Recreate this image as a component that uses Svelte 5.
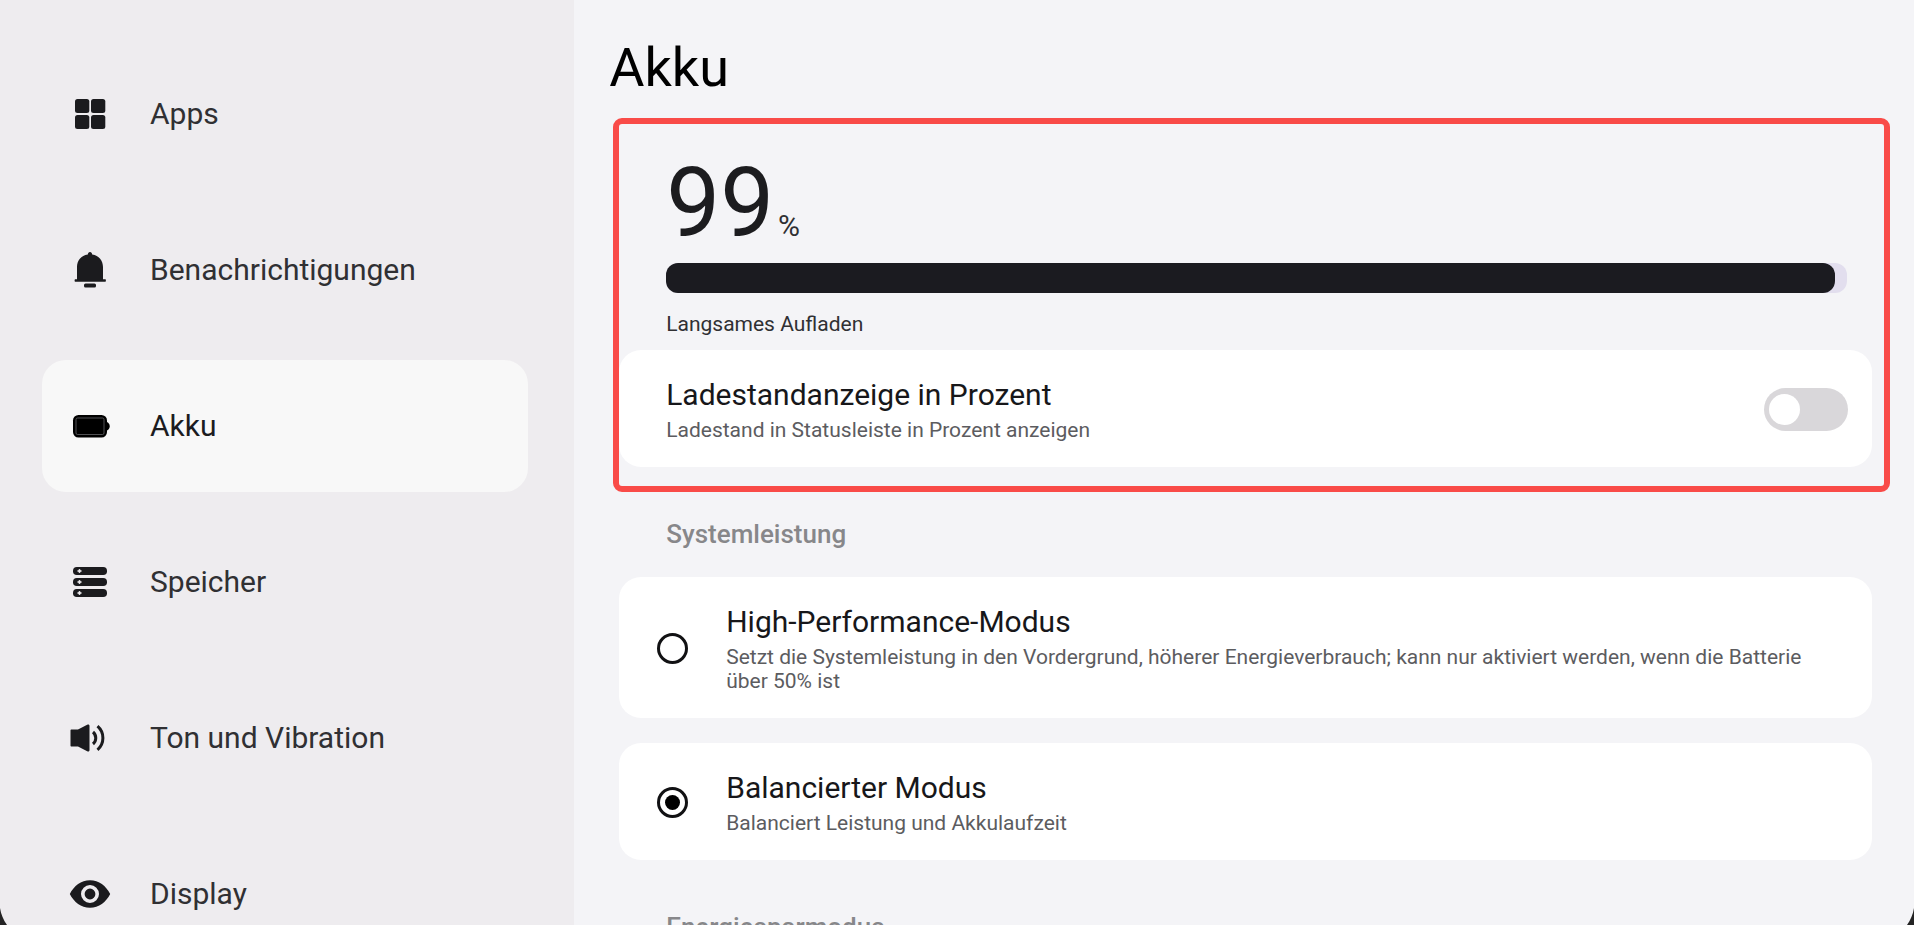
<script>
  const navItems = [
    { id: 'apps', label: 'Apps' },
    { id: 'bell', label: 'Benachrichtigungen' },
    { id: 'battery', label: 'Akku' },
    { id: 'storage', label: 'Speicher' },
    { id: 'sound', label: 'Ton und Vibration' },
    { id: 'display', label: 'Display' }
  ];

  const modes = [
    {
      id: 'performance',
      title: 'High-Performance-Modus',
      text: 'Setzt die Systemleistung in den Vordergrund, höherer Energieverbrauch; kann nur aktiviert werden, wenn die Batterie über 50% ist'
    },
    {
      id: 'balanced',
      title: 'Balancierter Modus',
      text: 'Balanciert Leistung und Akkulaufzeit'
    }
  ];

  const level = 99;
  let active = $state('battery');
  let mode = $state('balanced');
  let showPercent = $state(false);
</script>

<div class="screen">
  <nav class="sidebar" aria-label="Einstellungen">
    <ul>
      {#each navItems as item (item.id)}
        <li>
          <a
            href={'#' + item.id}
            class:active={active === item.id}
            aria-current={active === item.id ? 'page' : undefined}
            onclick={() => (active = item.id)}
          >
            <svg class="icon" viewBox="0 0 44 44" aria-hidden="true">
              {#if item.id === 'apps'}
                <rect x="7" y="7" width="14.300" height="14" rx="2.500" />
                <rect x="23" y="7" width="14.300" height="14" rx="2.500" />
                <rect x="7" y="23" width="14.300" height="14" rx="2.500" />
                <rect x="23" y="23" width="14.300" height="14" rx="2.500" />
              {:else if item.id === 'bell'}
                <path d="M22 4c1.300 0 2 .9 2.200 2.400C31 7.500 35 12.500 35 19v12.200h2c.7 0 .9.5.9 1.300s-.3 1.300-.9 1.300H7.500c-.7 0-.9-.5-.9-1.300s.3-1.300.9-1.300H9V19c0-6.500 4-11.500 10.800-12.600C20 4.900 20.700 4 22 4z" />
                <rect x="16" y="35.500" width="12" height="4" rx="1.500" />
              {:else if item.id === 'battery'}
                <rect x="5" y="11" width="34" height="22.500" rx="5.500" />
                <path d="M39 18c1.800.8 2.700 2.200 2.700 4.200s-.9 3.400-2.700 4.200z" />
                <rect class="outline" x="8" y="14" width="28" height="16.500" rx="1.500" />
              {:else if item.id === 'storage'}
                {#each [7, 18, 29] as y}
                  <rect x="5" {y} width="34" height="8" rx="3.800" />
                  <path class="mark" d="M11.500 {y + 2}l.7 1.300 1.300.7-1.300.7-.7 1.300-.7-1.300-1.300-.7 1.300-.7z" />
                {/each}
              {:else if item.id === 'sound'}
                <path d="M2.500 14.500c0-.6.4-1 1-1h6.500l9.200-4.700c1.300-.7 2.300-.2 2.300 1.200v24c0 1.400-1 1.900-2.300 1.200l-9.200-4.700H3.500c-.6 0-1-.4-1-1z" />
                <path class="wave" d="M25 16c3.700 3.200 3.700 8.800 0 12M29.500 10.200c7.200 6.200 7.200 17.400 0 23.600" />
              {:else}
                <path fill-rule="evenodd" d="M1.800 22C6 13.800 13 8.200 22 8.200S38 13.800 42.200 22C38 30.200 31 35.800 22 35.800S6 30.200 1.800 22zM22 13a9 9 0 1 0 0 18 9 9 0 0 0 0-18zm0 3.600a5.400 5.400 0 1 1 0 10.800 5.400 5.400 0 0 1 0-10.800z" />
              {/if}
            </svg>
            <span>{item.label}</span>
          </a>
        </li>
      {/each}
    </ul>
  </nav>

  <main>
    <h1>Akku</h1>

    <section class="highlight" aria-label="Ladestand">
      <div class="status">
        <p class="level"><span class="number">{level}</span><span class="unit">%</span></p>
        <div class="bar" role="meter" aria-label="Ladestand" aria-valuemin="0" aria-valuemax="100" aria-valuenow={level}>
          <div class="fill" style="width: {level}%"></div>
        </div>
        <p class="caption">Langsames Aufladen</p>
      </div>

      <label class="card toggle-card">
        <span class="texts">
          <span class="title">Ladestandanzeige in Prozent</span>
          <span class="text">Ladestand in Statusleiste in Prozent anzeigen</span>
        </span>
        <input class="switch" type="checkbox" role="switch" bind:checked={showPercent} />
      </label>
    </section>

    <h2>Systemleistung</h2>
    <div class="modes" role="radiogroup" aria-label="Systemleistung">
      {#each modes as m (m.id)}
        <label class="card mode-card">
          <input class="radio" type="radio" name="mode" value={m.id} bind:group={mode} />
          <span class="texts">
            <span class="title">{m.title}</span>
            <span class="text">{m.text}</span>
          </span>
        </label>
      {/each}
    </div>

    <h2 class="next">Energiesparmodus</h2>
  </main>

  <svg class="corner left" viewBox="0 0 7 17" aria-hidden="true"><path d="M0 0C1 6.500 3.500 12 7 17H0z" /></svg>
  <svg class="corner right" viewBox="0 0 7 17" aria-hidden="true"><path d="M7 0C6 6.500 3.500 12 0 17h7z" /></svg>
</div>

<style>
  :global(body) {
    margin: 0;
  }

  .screen {
    position: relative;
    display: flex;
    height: 100vh;
    overflow: hidden;
    background: #f4f4f7;
    color: #1c1c1f;
    font-family: Roboto, "Noto Sans", sans-serif;
  }

  .sidebar {
    flex: 0 0 30%;
    box-sizing: border-box;
    padding: 48px 46px 0 42px;
    background: #eeecef;
  }

  ul {
    display: flex;
    flex-direction: column;
    gap: 24px;
    margin: 0;
    padding: 0;
    list-style: none;
  }

  a {
    display: flex;
    align-items: center;
    gap: 38px;
    height: 132px;
    padding-left: 26px;
    border-radius: 24px;
    color: #303033;
    font-size: 30px;
    line-height: 36px;
    text-decoration: none;
  }

  a.active {
    background: #f8f8f8;
    color: #1c1c1f;
  }

  .icon {
    flex: none;
    width: 44px;
    height: 44px;
    fill: #1b1b1e;
  }

  .active .icon {
    fill: #000;
  }

  .icon .outline {
    fill: none;
    stroke: #66666a;
    stroke-width: 0.8;
  }

  .icon .mark {
    fill: #eeecef;
    stroke: #eeecef;
    stroke-width: 0.8;
  }

  .icon .wave {
    fill: none;
    stroke: #1b1b1e;
    stroke-width: 3;
  }

  main {
    flex: 1;
    min-width: 0;
    padding: 36px 24px 0 39px;
  }

  h1,
  h2,
  p {
    margin: 0;
    font-weight: 400;
  }

  h1 {
    margin: 0 0 18px -4px;
    color: #000;
    font-size: 54px;
    line-height: 64px;
  }

  .highlight {
    padding: 31px 12px 19px 0;
    border: 6px solid #f94b48;
    border-radius: 9px;
  }

  .status {
    padding: 0 25px 14px 47px;
  }

  .level {
    display: flex;
    align-items: baseline;
    gap: 4px;
    margin-bottom: 12px;
  }

  .number {
    font-size: 96px;
    line-height: 96px;
  }

  .unit {
    color: #303033;
    font-size: 30px;
    line-height: 36px;
  }

  .bar {
    height: 30px;
    border-radius: 12px;
    background: #e2deee;
  }

  .fill {
    height: 100%;
    border-radius: 12px;
    background: #1b1b20;
  }

  .caption {
    margin-top: 19px;
    color: #303033;
    font-size: 21px;
    line-height: 24px;
  }

  .card {
    display: flex;
    align-items: center;
    border-radius: 22px;
    background: #fff;
  }

  .toggle-card {
    justify-content: space-between;
    padding: 27px 24px 25px 47px;
  }

  .mode-card {
    gap: 38px;
    padding: 27px 48px 25px 38px;
  }

  .texts {
    display: flex;
    flex-direction: column;
    gap: 5px;
  }

  .title {
    color: #17171a;
    font-size: 30px;
    line-height: 36px;
  }

  .text {
    color: #5c5c5f;
    font-size: 21px;
    line-height: 24px;
  }

  .switch {
    appearance: none;
    flex: none;
    display: flex;
    align-items: center;
    width: 84px;
    height: 43px;
    margin: 0;
    padding: 0 5px;
    box-sizing: border-box;
    border-radius: 22px;
    background: #d9d7da;
  }

  .switch::before {
    content: "";
    width: 31px;
    height: 31px;
    border-radius: 50%;
    background: #fff;
  }

  .switch:checked {
    justify-content: flex-end;
    background: #1b1b20;
  }

  h2 {
    margin: 26px 0 27px 53px;
    color: #87878a;
    font-size: 26px;
    font-weight: 500;
    line-height: 32px;
  }

  h2.next {
    margin-top: 51px;
  }

  .modes {
    display: flex;
    flex-direction: column;
    gap: 25px;
    margin: 0 18px 0 6px;
  }

  .radio {
    appearance: none;
    flex: none;
    display: grid;
    place-items: center;
    box-sizing: border-box;
    width: 31px;
    height: 31px;
    margin: 0;
    border: 3px solid #111113;
    border-radius: 50%;
  }

  .radio:checked::before {
    content: "";
    width: 15px;
    height: 15px;
    border-radius: 50%;
    background: #000;
  }

  .corner {
    position: absolute;
    bottom: 0;
    width: 7px;
    height: 17px;
    fill: #242424;
  }

  .corner.left {
    left: 0;
  }

  .corner.right {
    right: 0;
  }
</style>
